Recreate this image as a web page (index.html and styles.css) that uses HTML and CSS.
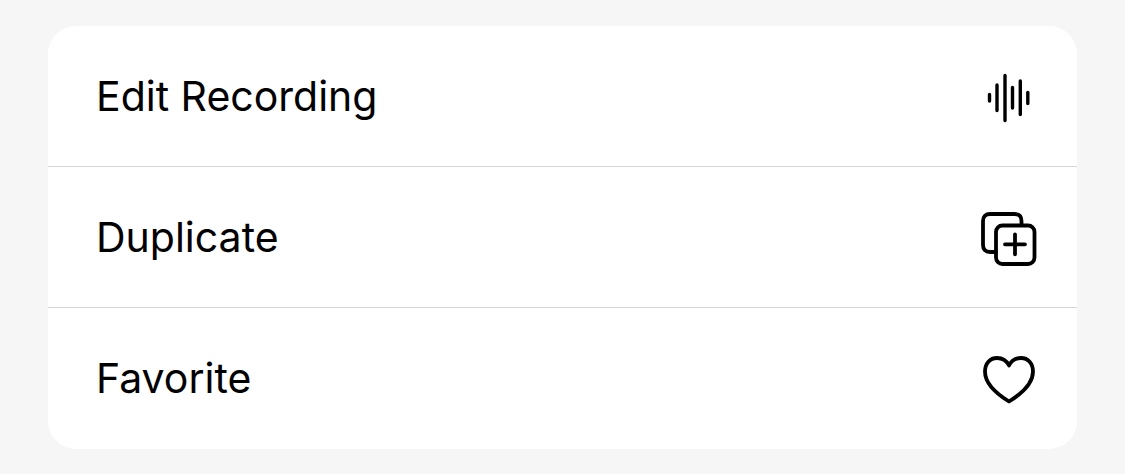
FILE: index.html
```html
<!DOCTYPE html>
<html lang="en">
<head>
  <meta charset="UTF-8">
  <meta name="viewport" content="width=device-width, initial-scale=1">
  <title>Recording Actions</title>
  <link rel="stylesheet" href="styles.css">
</head>
<body>

  <main class="menu">
    <button type="button" class="menu-item">
      <span>Edit Recording</span>
      <svg class="icon" viewBox="0 0 60 60" aria-hidden="true">
        <path d="M10.500 28.500v6.500M18 19v25.500M26 9.500v45M33.500 21.500v20.500M41.300 15v33.500M48.800 26.500v11" stroke-width="3.400"/>
      </svg>
    </button>
    <button type="button" class="menu-item">
      <span>Duplicate</span>
      <svg class="icon" viewBox="0 0 60 60" aria-hidden="true">
        <path d="M17 45H11C6.500 45 4 42.500 4 38V14C4 9.500 6.500 7 11 7H35.500C40 7 42.500 9.500 42.500 14V18"/>
        <rect x="17" y="18.500" width="38.500" height="38.500" rx="6.500"/>
        <path d="M36 27.300v20M26 37.300h20"/>
      </svg>
    </button>
    <button type="button" class="menu-item">
      <span>Favorite</span>
      <svg class="icon" viewBox="0 0 60 60" aria-hidden="true">
        <path d="M30 53.500C17 45.500 6 35.500 6 23.500C6 15.500 11 10 18 10C23.500 10 27.500 12.500 30 17.500C32.500 12.500 36.500 10 42 10C49 10 54 15.500 54 23.500C54 35.500 43 45.500 30 53.500Z"/>
      </svg>
    </button>
  </main>

</body>
</html>
```

FILE: styles.css
```css
body {
  font-family: Inter, "Liberation Sans", sans-serif;
  background-color: #f6f6f6;
  margin: 0;
  padding: 26px 48px;
}
.menu {
  background-color: white;
  border-radius: 28px;
  overflow: hidden;
}
.menu-item {
  display: flex;
  justify-content: space-between;
  align-items: center;
  width: 100%;
  height: 141px;
  padding: 0 38px 0 48px;
  border: none;
  border-bottom: 1px solid #d5d5d5;
  background: none;
  color: black;
  font-family: inherit;
  font-size: 41px;
  text-align: left;
}
.menu-item:last-child {
  border-bottom-color: transparent;
}
.icon {
  width: 60px;
  height: 60px;
  fill: none;
  stroke: black;
  stroke-width: 3.8;
  stroke-linecap: round;
  stroke-linejoin: round;
}
```
